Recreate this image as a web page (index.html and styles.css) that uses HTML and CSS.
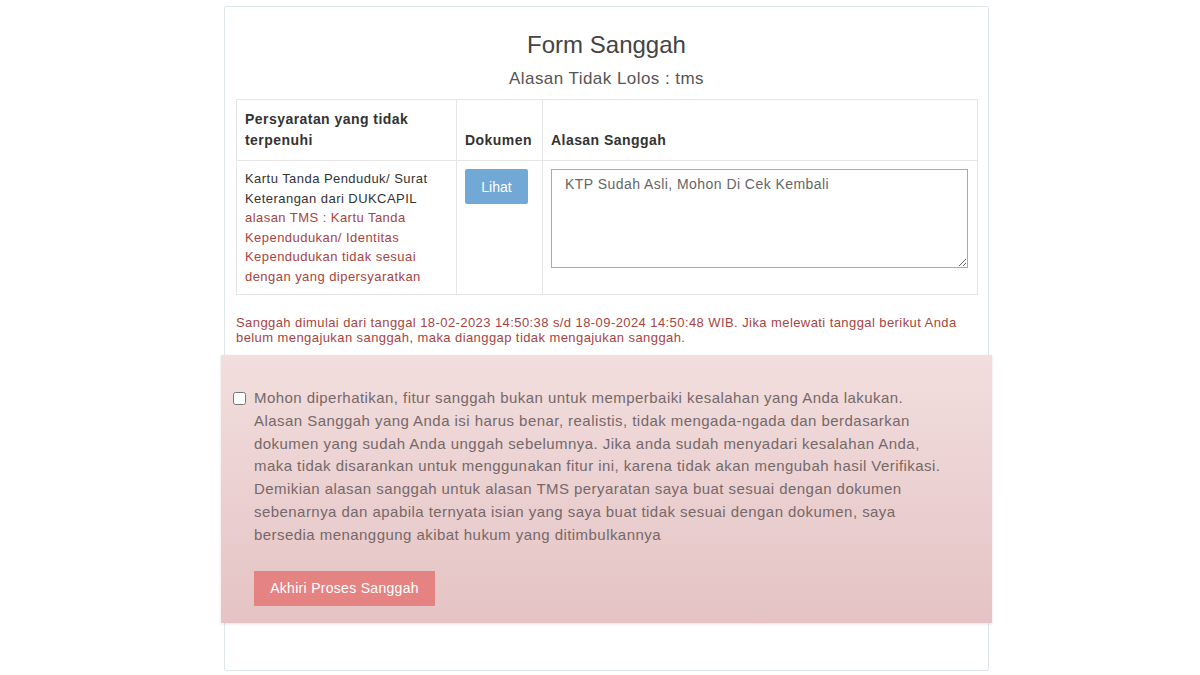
FILE: index.html
```html
<!DOCTYPE html>
<html>

<head>
  <title>Form Sanggah</title>
  <link rel="stylesheet" href="styles.css">
</head>

<body>
  <div class="card">
    <h1 class="title">Form Sanggah</h1>
    <p class="subtitle">Alasan Tidak Lolos : tms</p>

    <table class="tabel-sanggah">
      <thead>
        <tr>
          <th class="col-syarat">Persyaratan yang tidak terpenuhi</th>
          <th class="col-dok">Dokumen</th>
          <th class="col-alasan">Alasan Sanggah</th>
        </tr>
      </thead>
      <tbody>
        <tr>
          <td>
            Kartu Tanda Penduduk/ Surat Keterangan dari DUKCAPIL
            <span class="text-danger">alasan TMS : Kartu Tanda Kependudukan/ Identitas Kependudukan tidak sesuai dengan yang dipersyaratkan</span>
          </td>
          <td><button class="btn-lihat">Lihat</button></td>
          <td><textarea class="input-alasan">KTP Sudah Asli, Mohon Di Cek Kembali</textarea></td>
        </tr>
      </tbody>
    </table>

    <p class="note">Sanggah dimulai dari tanggal 18-02-2023 14:50:38 s/d 18-09-2024 14:50:48 WIB. Jika melewati tanggal berikut Anda belum mengajukan sanggah, maka dianggap tidak mengajukan sanggah.</p>

    <div class="alert-box">
      <label class="pernyataan">
        <input type="checkbox">
        <span>Mohon diperhatikan, fitur sanggah bukan untuk memperbaiki kesalahan yang Anda lakukan. Alasan Sanggah yang Anda isi harus benar, realistis, tidak mengada-ngada dan berdasarkan dokumen yang sudah Anda unggah sebelumnya. Jika anda sudah menyadari kesalahan Anda, maka tidak disarankan untuk menggunakan fitur ini, karena tidak akan mengubah hasil Verifikasi. Demikian alasan sanggah untuk alasan TMS peryaratan saya buat sesuai dengan dokumen sebenarnya dan apabila ternyata isian yang saya buat tidak sesuai dengan dokumen, saya bersedia menanggung akibat hukum yang ditimbulkannya</span>
      </label>
      <button class="btn-akhiri">Akhiri Proses Sanggah</button>
    </div>
  </div>
</body>

</html>
```

FILE: styles.css
```css
body {
  margin: 0;
  background-color: #fff;
  font-family: "Liberation Sans", Arial, sans-serif;
  letter-spacing: 0.45px;
  color: #333;
}

.card {
  width: 741px;
  margin: 6px 0 0 224px;
  padding: 0 11px 47px;
  border: 1px solid #e0e7eb;
  border-radius: 2px;
}

.title {
  margin: 23px 0 0;
  font-size: 24px;
  font-weight: normal;
  letter-spacing: 0;
  text-align: center;
  color: #444;
  line-height: 30px;
}

.subtitle {
  margin: 8px 0 0;
  font-size: 17px;
  text-align: center;
  color: #555;
  line-height: 22px;
}

.tabel-sanggah {
  width: 742px;
  margin-top: 9px;
  border-collapse: collapse;
  border: 1px solid #e6e6e6;
}

.tabel-sanggah th,
.tabel-sanggah td {
  border: 1px solid #e6e6e6;
  padding: 8px;
  text-align: left;
}

.tabel-sanggah th {
  font-size: 14px;
  font-weight: bold;
  line-height: 21px;
  vertical-align: bottom;
  color: #333;
  padding-bottom: 9px;
  height: 43px;
}

.tabel-sanggah td {
  font-size: 13px;
  line-height: 19.5px;
  vertical-align: top;
  color: #333;
}

.tabel-sanggah .col-syarat {
  width: 203px;
}

.tabel-sanggah .col-dok {
  width: 69px;
}

.text-danger {
  display: block;
  color: #a94442;
}

.btn-lihat {
  width: 63px;
  height: 35px;
  border: none;
  border-radius: 2px;
  background-color: #72a8d6;
  color: #fff;
  font-family: inherit;
  font-size: 14px;
}

.input-alasan {
  display: block;
  box-sizing: border-box;
  width: 417px;
  height: 99px;
  padding: 6px 13px;
  border: 1px solid #aaa;
  font-family: inherit;
  font-size: 14px;
  letter-spacing: 0.45px;
  line-height: 17px;
  color: #666;
  resize: vertical;
}

.note {
  margin: 20px 0 0;
  font-size: 13px;
  letter-spacing: 0.42px;
  line-height: 15px;
  color: #a94442;
}

.alert-box {
  margin: 10px -15px 0;
  padding: 32px 48px 17px 12px;
  background-image: linear-gradient(to bottom, #f2dede 0, #e5c3c4 100%);
  box-shadow: 0 1px 3px rgba(0, 0, 0, 0.12);
}

.pernyataan {
  display: flex;
  gap: 8px;
  font-size: 15px;
  line-height: 22.8px;
  color: #756869;
}

.pernyataan input {
  flex: none;
  width: 13px;
  height: 13px;
  margin: 5px 0 0;
}

.btn-akhiri {
  margin: 24px 0 0 21px;
  width: 181px;
  height: 35px;
  border: none;
  background-color: #e58383;
  color: #fff;
  font-family: inherit;
  font-size: 14px;
  letter-spacing: 0.3px;
}
```
